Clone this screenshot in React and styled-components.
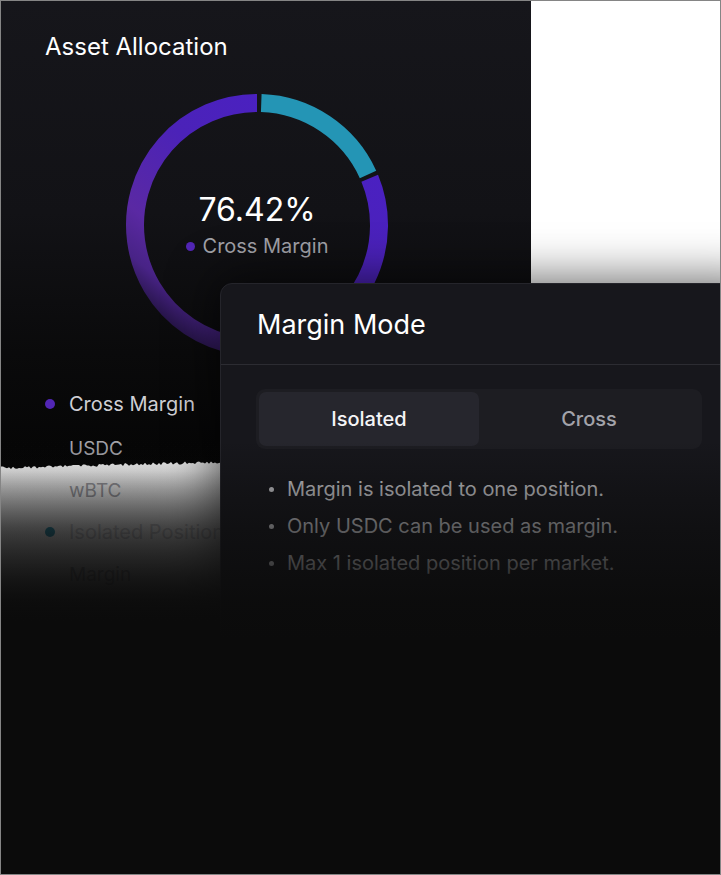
import React from 'react';
import styled, { createGlobalStyle } from 'styled-components';

const GlobalStyle = createGlobalStyle`
  html, body {
    margin: 0;
    padding: 0;
    background: #fff;
  }
  body {
    font-family: Inter, "Noto Sans", sans-serif;
    -webkit-font-smoothing: antialiased;
  }
`;

// torn paper edge along the bottom of the card
const tearEdge = (() => {
  const pts = [];
  for (let x = 530; x >= 0; x -= 2) {
    const n = Math.sin(x * 12.9898) * 43758.5453;
    const jitter = (n - Math.floor(n)) * 3 - 1.5;
    const y = 467 - (x * 6) / 220 + jitter;
    pts.push(`${x}px ${y.toFixed(1)}px`);
  }
  return `polygon(0 0, 530px 0, ${pts.join(', ')})`;
})();

const Frame = styled.div`
  position: relative;
  width: 721px;
  height: 875px;
  box-sizing: border-box;
  border: 1px solid #858585;
  background: #fff;
  overflow: hidden;
`;

const Card = styled.section`
  position: relative;
  z-index: 0;
  width: 530px;
  box-sizing: border-box;
  padding: 31px 0 0 44px;

  &::before {
    content: '';
    position: absolute;
    z-index: -1;
    left: 0;
    top: 0;
    width: 530px;
    height: 470px;
    background: linear-gradient(180deg, #16161b 0%, #121216 45%, #0a0a0b 75%, #050505 100%);
    clip-path: ${tearEdge};
  }
`;

const Title = styled.h2`
  margin: 0;
  font-size: 24px;
  line-height: 30px;
  font-weight: 400;
  color: #fff;
`;

const DonutWrap = styled.div`
  display: grid;
  width: 264px;
  height: 264px;
  margin: 31px 0 0 80px;

  & > * {
    grid-area: 1 / 1;
  }
`;

const DonutCenter = styled.div`
  align-self: center;
  justify-self: center;
  display: flex;
  flex-direction: column;
  align-items: center;
  gap: 2px;
`;

const Percent = styled.div`
  font-size: 32px;
  line-height: 40px;
  color: #fff;
`;

const CenterLabel = styled.div`
  display: flex;
  align-items: center;
  gap: 8px;
  font-size: 20px;
  line-height: 28px;
  color: #a1a1a8;
`;

const Dot = styled.span`
  width: ${(p) => p.$size || 10}px;
  height: ${(p) => p.$size || 10}px;
  border-radius: 50%;
  background: ${(p) => p.$color};
  flex: none;
`;

const Legend = styled.div`
  margin-top: 24px;
  width: 427px;
`;

const Row = styled.div`
  display: flex;
  align-items: center;
  gap: 14px;
  height: ${(p) => (p.$first ? 45 : 42)}px;
  margin-bottom: ${(p) => (p.$first ? 1 : 0)}px;
  padding-left: ${(p) => (p.$sub ? 24 : 0)}px;
  font-size: ${(p) => (p.$sub ? 19 : 20)}px;
  color: ${(p) => (p.$sub ? '#a3a3a9' : '#cfcfd4')};
`;

const Modal = styled.div`
  position: absolute;
  left: 219px;
  top: 282px;
  width: 540px;
  height: 640px;
  background: #17171c;
  border: 1px solid #25252b;
  border-radius: 12px;
  box-shadow: 0 0 48px 4px rgba(0, 0, 0, 0.6);
`;

const ModalHeader = styled.div`
  display: flex;
  align-items: center;
  height: 80px;
  padding-left: 36px;
  border-bottom: 1px solid #2c2c32;
`;

const ModalTitle = styled.h3`
  margin: 0;
  font-size: 27px;
  font-weight: 400;
  color: #fff;
`;

const ModalBody = styled.div`
  padding: 24px 0 0 35px;
`;

const Segmented = styled.div`
  display: grid;
  grid-template-columns: 1fr 1fr;
  width: 446px;
  height: 60px;
  box-sizing: border-box;
  padding: 3px;
  border-radius: 9px;
  background: #1d1d22;
`;

const Tab = styled.div`
  display: flex;
  align-items: center;
  justify-content: center;
  border-radius: 7px;
  font-size: 20px;
  font-weight: 500;
  background: ${(p) => (p.$active ? '#26262d' : 'transparent')};
  color: ${(p) => (p.$active ? '#f4f4f6' : '#a3a3aa')};
`;

const Bullets = styled.ul`
  list-style: none;
  margin: 22px 0 0;
  padding: 0;
`;

const Bullet = styled.li`
  position: relative;
  padding-left: 31px;
  font-size: 20px;
  line-height: 37px;
  color: #d0d0d4;

  &::before {
    content: '';
    position: absolute;
    left: 13px;
    top: 16px;
    width: 5px;
    height: 5px;
    border-radius: 50%;
    background: currentColor;
  }
`;

// dark fade over the lower part; the left strip below the tear fades faster
const Fade = styled.div`
  position: absolute;
  left: 0;
  right: 0;
  top: 440px;
  bottom: 0;
  pointer-events: none;
  background-image:
    linear-gradient(
      180deg,
      rgba(11, 11, 11, 0) 0px,
      rgba(11, 11, 11, 0.02) 30px,
      rgba(11, 11, 11, 0.16) 51px,
      rgba(11, 11, 11, 0.51) 93px,
      rgba(11, 11, 11, 0.75) 135px,
      #0b0b0b 180px
    ),
    linear-gradient(
      180deg,
      rgba(11, 11, 11, 0) 0px,
      rgba(11, 11, 11, 0.2) 30px,
      rgba(11, 11, 11, 0.35) 49px,
      rgba(11, 11, 11, 0.58) 86px,
      rgba(11, 11, 11, 0.74) 123px,
      rgba(11, 11, 11, 0.93) 160px,
      #0b0b0b 200px
    );
  background-size: 219px 100%, 100% 100%;
  background-repeat: no-repeat;
`;

const C = 132;
const R = 122;

const polar = (deg) => {
  const a = ((deg - 90) * Math.PI) / 180;
  return [C + R * Math.cos(a), C + R * Math.sin(a)];
};

const arc = (from, to) => {
  const [x1, y1] = polar(from);
  const [x2, y2] = polar(to);
  const large = to - from > 180 ? 1 : 0;
  return `M ${x1} ${y1} A ${R} ${R} 0 ${large} 1 ${x2} ${y2}`;
};

const Donut = () => (
  <svg width="264" height="264" viewBox="0 0 264 264">
    <defs>
      <linearGradient id="purpleArc" x1="0.9" y1="0.1" x2="0.2" y2="1">
        <stop offset="0" stopColor="#4a20c4" />
        <stop offset="0.4" stopColor="#4b22b8" />
        <stop offset="0.72" stopColor="#5a29a3" />
        <stop offset="0.86" stopColor="#482386" />
        <stop offset="1" stopColor="#1a0f32" />
      </linearGradient>
    </defs>
    <path d={arc(2, 65.5)} fill="none" stroke="#2495b5" strokeWidth="18" />
    <path d={arc(67.5, 360)} fill="none" stroke="url(#purpleArc)" strokeWidth="18" />
  </svg>
);

const legend = [
  { label: 'Cross Margin', dot: '#5226b5' },
  { label: 'USDC', sub: true },
  { label: 'wBTC', sub: true },
  { label: 'Isolated Positions', dot: '#2596b5' },
  { label: 'Margin', sub: true },
];

const rules = [
  'Margin is isolated to one position.',
  'Only USDC can be used as margin.',
  'Max 1 isolated position per market.',
];

export default function App() {
  return (
    <>
      <GlobalStyle />
      <Frame>
        <Card>
          <Title>Asset Allocation</Title>
          <DonutWrap>
            <Donut />
            <DonutCenter>
              <Percent>76.42%</Percent>
              <CenterLabel>
                <Dot $color="#5226b5" $size={9} />
                Cross Margin
              </CenterLabel>
            </DonutCenter>
          </DonutWrap>
          <Legend>
            {legend.map((item, i) => (
              <Row key={item.label} $sub={item.sub} $first={i === 0}>
                {item.dot && <Dot $color={item.dot} />}
                {item.label}
              </Row>
            ))}
          </Legend>
        </Card>

        <Modal>
          <ModalHeader>
            <ModalTitle>Margin Mode</ModalTitle>
          </ModalHeader>
          <ModalBody>
            <Segmented>
              <Tab $active>Isolated</Tab>
              <Tab>Cross</Tab>
            </Segmented>
            <Bullets>
              {rules.map((r) => (
                <Bullet key={r}>{r}</Bullet>
              ))}
            </Bullets>
          </ModalBody>
        </Modal>

        <Fade />
      </Frame>
    </>
  );
}
